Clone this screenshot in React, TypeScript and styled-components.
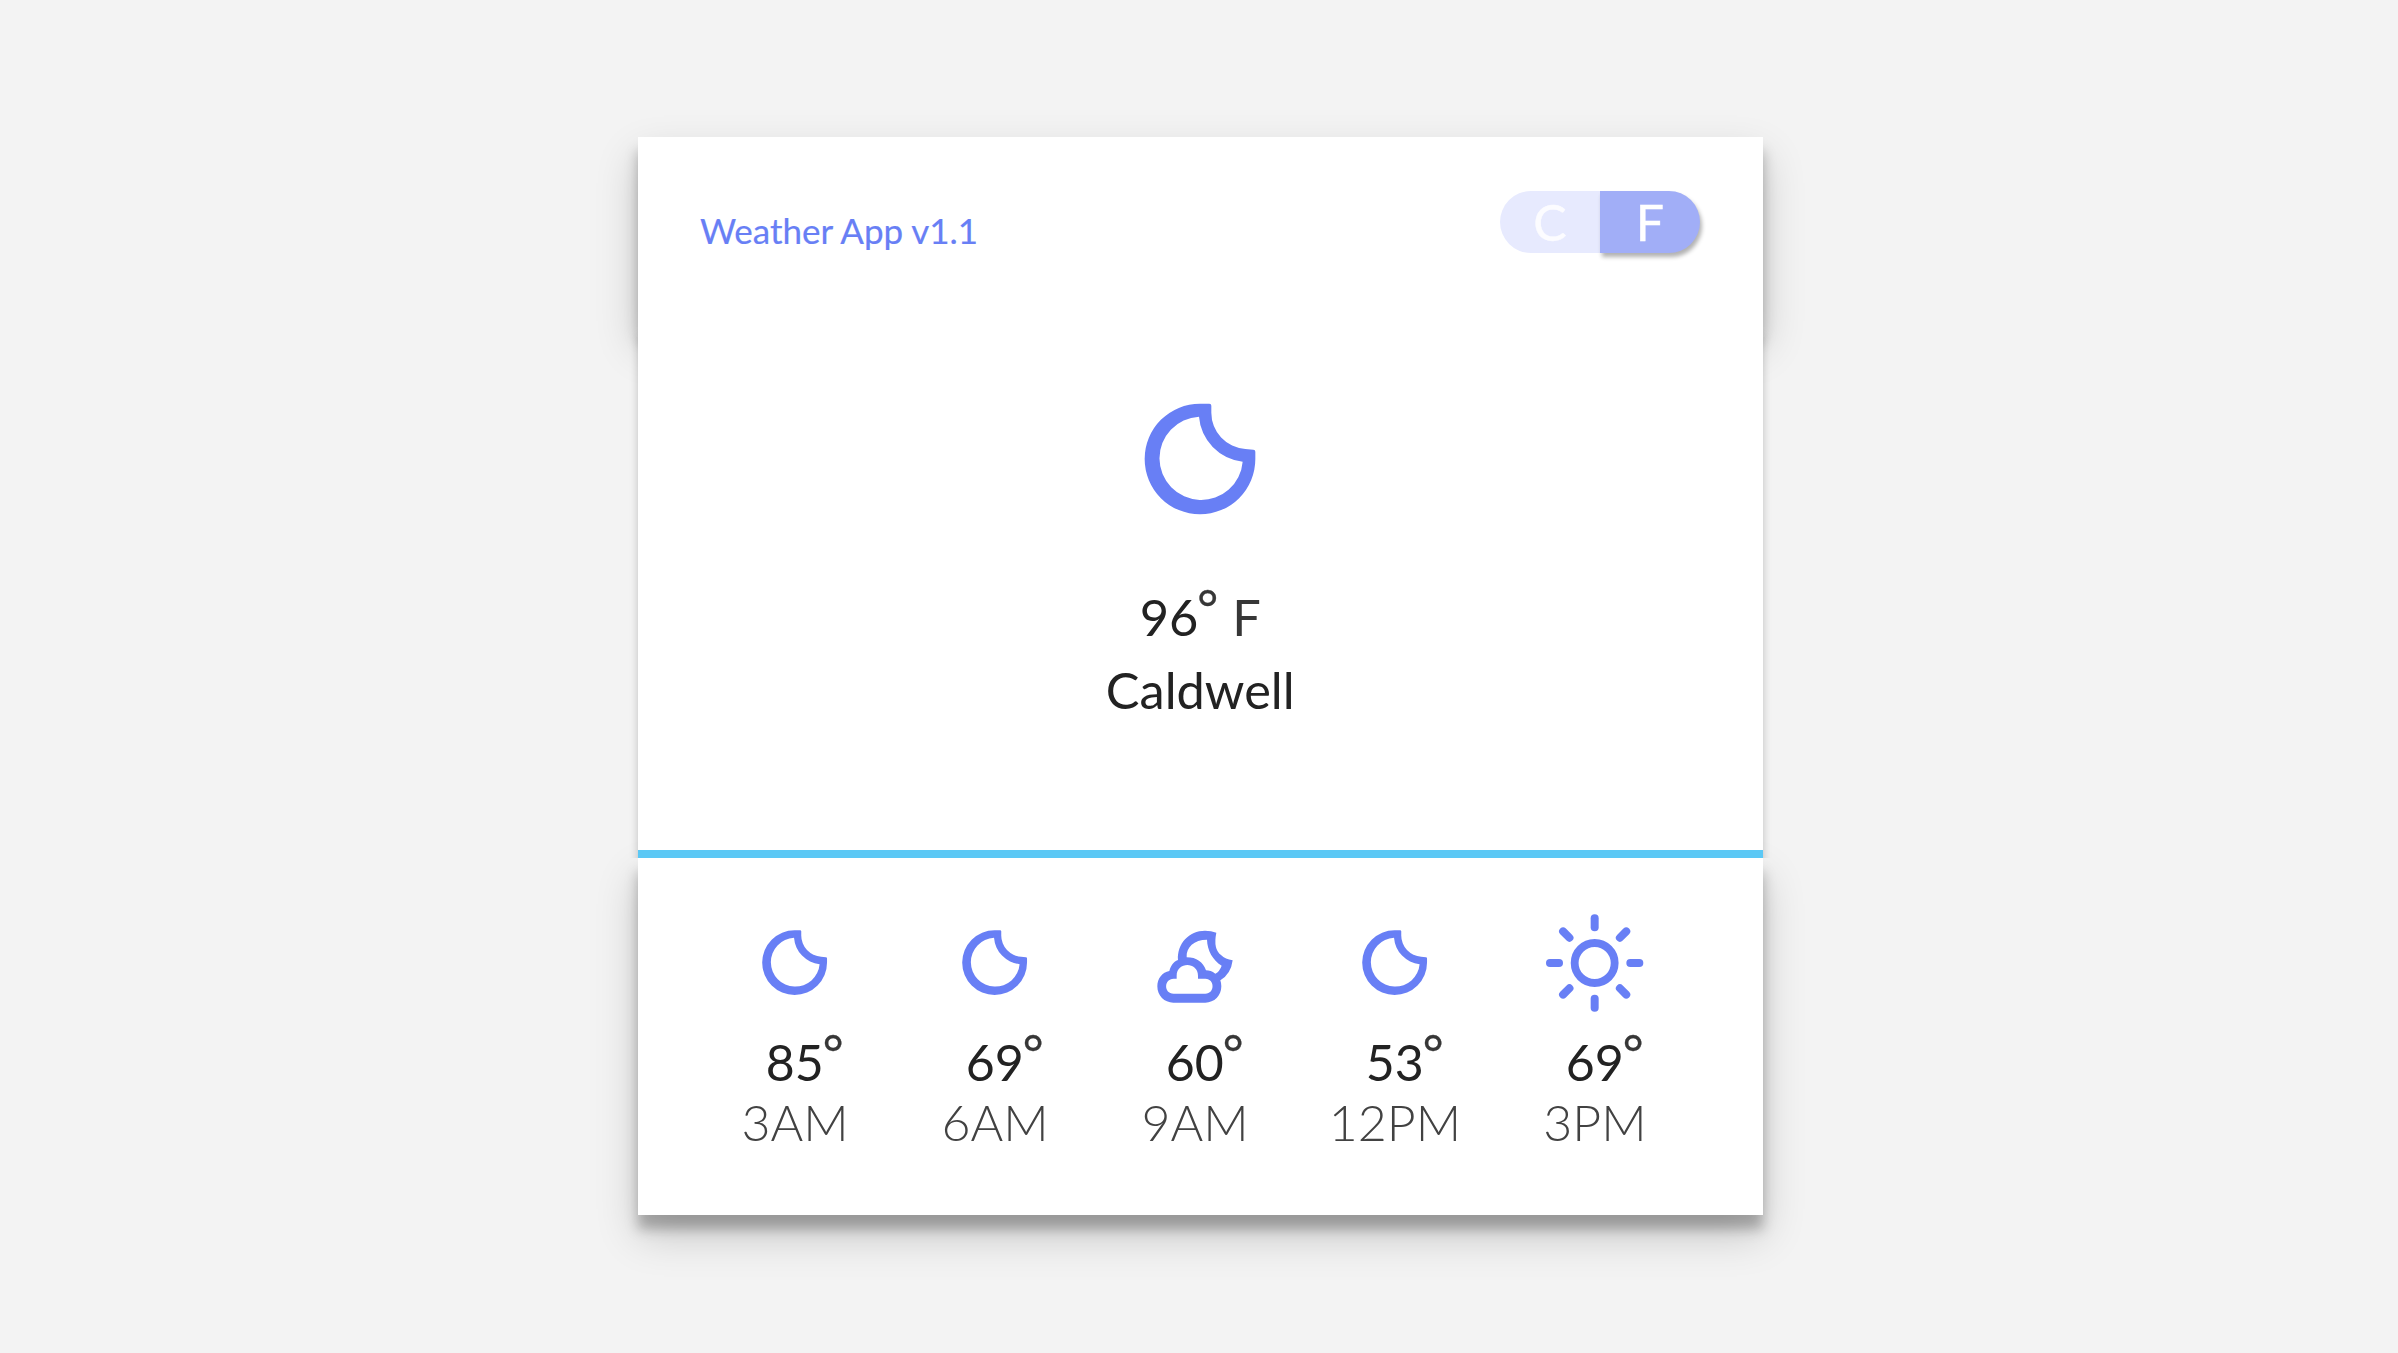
import React from 'react';
import styled, { createGlobalStyle, css } from 'styled-components';

const Global = createGlobalStyle`
  * { box-sizing: border-box; }
  body { margin: 0; background: #f3f3f3; font-family: Lato, "Open Sans", sans-serif; color: #222; }
`;

const accent = '#687ff5';

const raised = css`
  box-shadow: 0 20px 40px rgba(0, 0, 0, 0.19), 0 14px 12px rgba(0, 0, 0, 0.26);
`;

const Page = styled.div`
  height: 1353px;
  padding-top: 137px;
  display: flex;
  justify-content: center;
  align-items: flex-start;
`;

const Card = styled.main`
  width: 1124.5px;
  margin-left: 2.5px;
  display: flex;
  flex-direction: column;
`;

const Header = styled.header`
  height: 190px;
  padding: 54px 62.5px 0 62px;
  background: #fff;
  display: flex;
  justify-content: space-between;
  align-items: flex-start;
  ${raised}
`;

const Title = styled.h1`
  margin: 17.5px 0 0;
  font-size: 35px;
  font-weight: 400;
  line-height: 42px;
  color: ${accent};
  -webkit-text-stroke: 0.2px ${accent};
`;

const Toggle = styled.div`
  display: flex;
`;

const Unit = styled.button<{ $active?: boolean }>`
  width: 100px;
  height: 62px;
  padding: 0;
  border: 0;
  font: 400 50px/62px Lato, sans-serif;
  color: ${p => (p.$active ? '#fff' : '#fcfcff')};
  -webkit-text-stroke: 0.4px currentColor;
  background: ${p => (p.$active ? '#a1aef7' : '#e7eafe')};
  border-radius: ${p => (p.$active ? '0 31px 31px 0' : '31px 0 0 31px')};
  box-shadow: ${p => (p.$active ? '2px 4px 4px rgba(0, 0, 0, 0.3)' : 'none')};
`;

const Current = styled.section`
  position: relative;
  height: 531px;
  background: #fff;
  border-bottom: 8px solid #5bc8f5;
  display: flex;
  flex-direction: column;
  align-items: center;
  padding-top: 32px;
  box-shadow: 0 10px 8px rgba(0, 0, 0, 0.22);
  clip-path: inset(0 -20px);
`;

const Reading = styled.p`
  margin: 0;
  font-size: 50.5px;
  line-height: 73px;
  white-space: pre;

  &:first-of-type {
    margin-top: 21px;
  }
`;

const Mark = styled.span`
  color: #373737;
`;

const Degree = styled(Mark)`
  display: inline-block;
  line-height: 1;
  transform: translate(-1px, -10px);
  -webkit-text-stroke: 0.35px #373737;
`;

const Forecast = styled.section`
  height: 357px;
  padding: 5px 67px 0 57px;
  background: #fff;
  display: grid;
  grid-template-columns: repeat(5, 200px);
  ${raised}
`;

const Hour = styled.div`
  display: flex;
  flex-direction: column;
  align-items: center;
`;

const Temp = styled.div`
  margin-top: -31px;
  padding-left: 20px;
  font-size: 50px;
  line-height: 60px;
`;

const Time = styled.div`
  font-size: 50px;
  font-weight: 300;
  line-height: 60px;
  color: #424242;
`;

const Icon = styled.svg`
  display: block;
  flex: none;
  width: 200px;
  height: 200px;
  fill: ${accent};
`;

const MOON =
  'M0-166H28Q34-166 34-160V-139A109 109 0 0 0 136-30L160-28Q166-28 166-22V0A166 166 0 1 1 0-166Z M-3-127A125 125 0 1 0 128 8A147 147 0 0 1-3-127Z';

const LargeMoon = () => (
  <Icon viewBox="-300 -300 600 600">
    <path fillRule="evenodd" d={MOON} />
  </Icon>
);

const Moon = () => (
  <Icon viewBox="-510 -510 1024 1024">
    <path fillRule="evenodd" d={MOON} />
  </Icon>
);

const CloudMoon = () => (
  <Icon viewBox="-300 -300 600 600">
    <path
      fillRule="evenodd"
      d="M-51-9C-54-58-18-97 30-97Q49-97 64-91Q54-42 78-24Q91-11 113-8Q108 33 76 52Q79 61 79 70C79 98 58 119 31 119H-65C-92 119-113 98-113 70C-113 46-98 28-77 24C-72 8-66-3-51-9Z M-25-17C-27-47-3-70 36-70C37-38 53-9 80 8Q74 25 61 32C51 25 43 22 33 22C24-3 5-17-25-17Z M-64 47H-55V38C-55-5 9-5 9 38V47H31C60 47 60 92 31 92H-64C-94 92-94 47-64 47Z"
    />
  </Icon>
);

const Sun = () => (
  <Icon viewBox="-299 -300 600 600">
    <circle r="60" fill="none" stroke={accent} strokeWidth="23.5" />
    {[0, 45, 90, 135, 180, 225, 270, 315].map(a => (
      <rect key={a} x="-12" y="-146" width="24" height="51" rx="12" transform={`rotate(${a})`} />
    ))}
  </Icon>
);

const icons = { moon: Moon, cloud: CloudMoon, sun: Sun };

const hours: { icon: keyof typeof icons; temp: number; time: string }[] = [
  { icon: 'moon', temp: 85, time: '3AM' },
  { icon: 'moon', temp: 69, time: '6AM' },
  { icon: 'cloud', temp: 60, time: '9AM' },
  { icon: 'moon', temp: 53, time: '12PM' },
  { icon: 'sun', temp: 69, time: '3PM' },
];

export default function App() {
  return (
    <Page>
      <Global />
      <Card>
        <Header>
          <Title>Weather App v1.1</Title>
          <Toggle>
            <Unit>C</Unit>
            <Unit $active>F</Unit>
          </Toggle>
        </Header>
        <Current>
          <LargeMoon />
          <Reading>96<Degree>°</Degree><Mark> F</Mark></Reading>
          <Reading>Caldwell</Reading>
        </Current>
        <Forecast>
          {hours.map(h => {
            const Glyph = icons[h.icon];
            return (
              <Hour key={h.time}>
                <Glyph />
                <Temp>{h.temp}<Degree>°</Degree></Temp>
                <Time>{h.time}</Time>
              </Hour>
            );
          })}
        </Forecast>
      </Card>
    </Page>
  );
}
